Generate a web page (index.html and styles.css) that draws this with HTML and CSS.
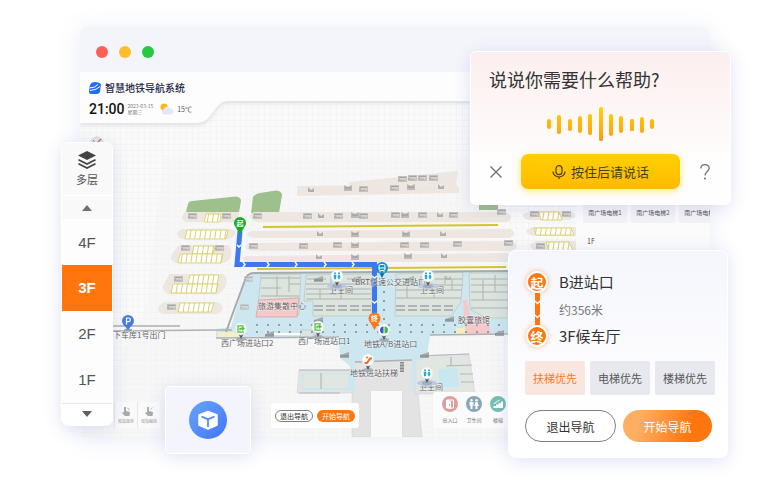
FILE: index.html
```html
<!DOCTYPE html>
<html lang="zh-CN">
<head>
<meta charset="utf-8">
<title>智慧地铁导航系统</title>
<link rel="stylesheet" href="styles.css">
</head>
<body>
<main class="stage">
  <section class="window">
    <div class="titlebar"><i class="dot red"></i><i class="dot yellow"></i><i class="dot green"></i></div>
    <div class="screen">
      <svg class="map" viewBox="80 72 630 365" preserveAspectRatio="xMinYMin slice" role="img" aria-label="车站地图">
        <defs>
          <pattern id="grid" width="6" height="6" patternUnits="userSpaceOnUse"><path d="M0 .5H6M.5 0V6" stroke="#f5f5f6" fill="none"/></pattern>
          <pattern id="bays" width="5" height="40" patternUnits="userSpaceOnUse" patternTransform="skewX(-9)"><rect width="5" height="40" fill="#fff"/><path d="M2.500 0V40" stroke="#d8d16a" stroke-width="1"/></pattern>
          <pattern id="posts" width="11" height="7" patternUnits="userSpaceOnUse"><rect x="3" y="2" width="2" height="2" fill="#929ca4"/></pattern>
          <pattern id="vposts" width="10" height="9" patternUnits="userSpaceOnUse"><rect x="3" y="3" width="2" height="2" fill="#929ca4"/></pattern>
          <g id="kiosk"><rect width="9" height="6" fill="#c4c2bf"/><path d="M1 1.500H8M0 4H6" stroke="#a5a5a8"/><path d="M2 3H8" stroke="#e4e2df"/></g>
          <g id="stair"><path d="M0 0 4 2 8 0V6H0Z" fill="#bcbab8"/><path d="M1 3H7" stroke="#98989b"/></g>
          <g id="step"><path d="M0 5V0L3 3 6 1V5Z" fill="#b0afad"/></g>
          <g id="ramp"><path d="M0 2 9-1V5H0Z" fill="#a6acad"/><path d="M0 3H9" stroke="#7d8587"/></g>
          <g id="pin"><ellipse cy="10" rx="5" ry="2" fill="#a8adb5"/><path d="M-3 4 0 10 3 4Z" fill="#555b63"/><circle r="6" fill="#fff" stroke="#dde3e6" stroke-width=".6"/></g>
          <g id="wc"><ellipse cy="10" rx="10" ry="3" fill="#b7cbe9"/><use href="#pin"/><g fill="#25a8e0"><circle cx="-2" cy="-2.700" r="1"/><path d="M-3.400-1.200h2.800L-1 3.300h-2Z"/><circle cx="2" cy="-2.700" r="1"/><path d="M1.300-1.200h1.400l.9 3H2.700v1.500H1.300V1.800H.4Z"/></g></g>
          <g id="exit"><use href="#pin"/><path d="M3-3.200H-3V3.200H3M-1 1.500V-.5H2.500M1-2 3-.5 1 1.200" fill="none" stroke="#4ec537" stroke-width="1.300"/></g>
          <filter id="soft" x="-5%" y="-20%" width="110%" height="150%"><feDropShadow dx="0" dy="2" stdDeviation="2" flood-color="#8d93a8" flood-opacity=".28"/></filter>
        </defs>
        <rect x="80" y="72" width="630" height="365" fill="#fafafa"/>
        <rect x="80" y="100" width="630" height="337" fill="url(#grid)"/>
        <path d="M164 158H480L508 437H80L145 310Z" fill="#f3f3f4" opacity=".45"/>

        <g fill="#9dc08c">
          <path d="M186 212 188 204Q189 201 192 201L236 196.500Q241 197 241 201L239 212Z"/>
          <path d="M251 213 253 197Q255 194 260 193L276 190.500Q282 191 282 195L279 213Z"/>
          <path d="M479 205H498V210H479Z"/>
        </g>

        <g fill="#eee7e1" stroke="#eee7e1" stroke-width="2" stroke-linejoin="round">
          <path d="M185 213H238V217Q238 221 234 221H188Q183 221 183 217Z"/>
          <path d="M184 230H231Q235 231 234 234T228 238H183Q178 237 178 234T184 230Z"/>
          <path d="M179 246H228Q232 250 230 256T222 262H176Q171 260 172 256Z"/>
          <path d="M170 275H223Q227 279 225 285T217 293H169Q163 291 164 286Z"/>
          <path d="M165 303H217Q222 305 221 309T215 313H164Q159 312 159 309T165 303Z"/>
          <path d="M350 183 457 172 455 183 350 185Z"/>
          <path d="M298 187 455 185Q459 188 458 192L298 195Z"/>
          <path d="M254 213H505Q511 215 510 219L507 221H257Q251 219 251 216Z"/>
          <path d="M251 232 510 230Q514 232 513 235L509 237H253Q248 235 248 234Z"/>
          <path d="M249 244 513 242Q517 245 515 248L511 250H252Q246 248 246 247Z"/>
          <path d="M247 257 507 254Q512 257 510 260L505 261H247Q243 259 244 258Z"/>
          <path d="M530 212H570Q575 214 574 217L567 219H529Q524 218 524 215Z"/>
          <path d="M533 228H575V235H533Q527 233 527 231Z"/>
          <path d="M537 242H575V250H536Q531 248 531 245Z"/>
        </g>
        <g fill="url(#bays)" stroke="#d5ce5c" stroke-width=".8">
          <path d="M206 214H221L220 222H204Z"/><path d="M187 230H228L226 239H185Z"/>
          <path d="M194 246H215L213 254H192Z"/><path d="M180 254H223L221 263H178Z"/>
          <path d="M190 275H219L217 284H188Z"/><path d="M173 284H218L216 293H171Z"/>
          <path d="M180 303H214L211 312H178Z"/>
          <path d="M539 212H559L562 220H541Z"/><path d="M534 228H571L574 235H536Z"/><path d="M546 242H569L573 251H549Z"/>
        </g>
        <use href="#kiosk" x="188" y="213"/><use href="#kiosk" x="222" y="213"/><use href="#kiosk" x="181" y="245"/><use href="#kiosk" x="215" y="245"/><use href="#kiosk" x="174" y="276"/><use href="#kiosk" x="167" y="304"/>
        <use href="#kiosk" x="253" y="213"/><use href="#kiosk" x="303" y="213"/><use href="#step" x="318" y="213"/><use href="#kiosk" x="334" y="213"/><use href="#stair" x="351" y="212"/><use href="#kiosk" x="359" y="213"/><use href="#kiosk" x="391" y="212"/><use href="#stair" x="401" y="212"/><use href="#kiosk" x="418" y="212"/><use href="#step" x="437" y="212"/><use href="#kiosk" x="449" y="212"/><use href="#kiosk" x="497" y="209"/>
        <use href="#step" x="317" y="231"/><use href="#stair" x="351" y="231"/><use href="#stair" x="402" y="231"/><use href="#step" x="440" y="231"/>
        <use href="#kiosk" x="249" y="243"/><use href="#kiosk" x="299" y="243"/><use href="#kiosk" x="333" y="242"/><use href="#stair" x="351" y="242"/><use href="#kiosk" x="400" y="242"/><use href="#kiosk" x="420" y="242"/><use href="#kiosk" x="453" y="241"/><use href="#kiosk" x="504" y="240"/>
        <use href="#step" x="316" y="254"/><use href="#stair" x="351" y="254"/><use href="#stair" x="404" y="253"/><use href="#step" x="441" y="253"/>
        <use href="#step" x="308" y="187"/><use href="#stair" x="344" y="185"/><use href="#kiosk" x="359" y="186"/><use href="#kiosk" x="390" y="185"/><use href="#stair" x="407" y="184"/><use href="#step" x="438" y="184"/>
        <use href="#kiosk" x="398" y="176"/><use href="#kiosk" x="408" y="175"/><use href="#kiosk" x="418" y="175"/><use href="#kiosk" x="429" y="175"/>
        <use href="#kiosk" x="530" y="211"/><use href="#kiosk" x="562" y="211"/><use href="#kiosk" x="536" y="243"/>
        <path d="M263 227 498 225M257 269 506 267" stroke="#d2c62f" stroke-width="2"/>

        <g fill="#e3e3e4" stroke="#d2d3d4" stroke-width=".6">
          <path d="M352 361H415L422 437H402V388H371V437H352Z"/>
          <path d="M299 370H353V393H297Z"/>
          <path d="M415 356 469 354 475 394H415Z"/>
        </g>
        <path d="M371 388H402V437H371Z" fill="#fafafa"/>
        <path d="M302 373H352V390H302Z" fill="#c9e7f0"/>
        <path d="M304 374H348V388H303Z" fill="#dfe7e0"/>
        <path d="M418 358H467L472 390H418Z" fill="#dfe7e0"/>
        <path d="M438 369 457 368 459 387H440Z" fill="#c9e7f0"/>
        <path d="M299 370H350M299 393H340M321 373V389M418 356 469 354M446 366 472 365M460 374H473M461 382H474M420 387H440M451 357V366" stroke="#b2b7b7" stroke-width="1.200" fill="none"/>

        <path d="M231 327 245 280Q247 273 254 273L508 271V333L430 335 427 357 416 361 415 391H350V366L340 358 339 337 216 337V329Z" fill="#cce7f0"/>
        <path d="M355 362 412 360V391H355Z" fill="#e3e3e4"/>
        <path d="M218 332H241V337H218Z" fill="#f4efc8"/>
        <g fill="#dbe4dd" stroke="#bcc4bf" stroke-width=".7">
          <path d="M261 275 301 274 299 315H257Z"/>
          <path d="M306 275 372 274V316H313V301H304Z"/>
          <path d="M396 274 463 272 461 302 451 316H395Z"/>
          <path d="M469 273H508V318H486L470 309Z"/>
          <path d="M301 330H314V337H300Z"/>
        </g>
        <g fill="none" stroke="#aeb4b3">
          <path d="M261 278H300M261 288H281M261 296H299M277 276V296M289 276V292M289 284H300M307 279H326M347 279H371M306 284H371M306 289H371M306 294H371M306 299H371M397 279H415M435 279H462M396 285H463M396 290H462M396 298H461M471 279H508M471 285H508M471 292H508M471 300H508M471 308H508M483 279V300M495 275V292"/>
          <path d="M314 306H371M314 310H371M396 306H455M396 310H455" stroke-width="2" stroke-dasharray="9 3"/>
          <path d="M331 276V283M358 276V283M421 276V284M445 276V284M452 279V290M407 285V298M434 285V298M320 289V299M341 289V299"/>
        </g>
        <path d="M259 300 299 298 297 317H256Z" fill="#f5c8ca" stroke="#d6aeb1"/>
        <path d="M463 300H467L470 316H487L491 334H466L464 316Z" fill="#f5c8ca"/>
        <path d="M456 328H465V335H456Z" fill="#f5edbf"/>
        <path d="M252 322H508V334H252Z" fill="url(#posts)"/>
        <path d="M375 284H393V335H375Z" fill="url(#vposts)"/>
        <path d="M226 332 245 280Q247 273 254 273L508 271" fill="none" stroke="#a5aaac" stroke-width="2"/>
        <path d="M113 326H180M113 331 217 330H232M216 338 339 337M430 335 508 334M355 362 412 360" fill="none" stroke="#aeb0b1" stroke-width="1.500"/>
        <path d="M265 334H300" stroke="#fff" stroke-width="2"/>
        <use href="#ramp" x="314" y="318"/><use href="#ramp" x="265" y="332"/><use href="#ramp" x="340" y="353"/><use href="#ramp" x="420" y="353"/><use href="#ramp" x="445" y="317"/><use href="#ramp" x="495" y="331"/><use href="#ramp" x="314" y="277"/><use href="#ramp" x="352" y="277"/><use href="#ramp" x="405" y="277"/>
        <g opacity=".7"><use href="#kiosk" x="244" y="276"/><use href="#kiosk" x="240" y="304"/><use href="#step" x="354" y="276"/><use href="#step" x="445" y="275"/></g>
        <path d="M400 362H404V372H400Z" fill="#868b8d"/><path d="M400 364H404M400 367H404M400 370H404" stroke="#ced1d1"/>

        <path d="M240 231 237 264.500H374.500V326" fill="none" stroke="#3d79ed" stroke-width="5"/>
        <path d="M237 245 239 247 241 245M243 262 245 264.500 243 267M267 262 269 264.500 267 267M295 262 297 264.500 295 267M324 262 326 264.500 324 267M352 262 354 264.500 352 267M372 276 374.500 278 377 276M372 301 374.500 303 377 301" fill="none" stroke="#fff" stroke-width="1.500"/>

        <g class="label">
          <text x="258" y="309">旅游集散中心</text><text x="355" y="285">BRT快速公交进站口</text>
          <text x="329" y="293">卫生间</text><text x="420" y="293">卫生间</text><text x="419" y="390">卫生间</text>
          <text x="458" y="323">胶囊旅馆</text><text x="221" y="346">西广场进站口2</text><text x="298" y="344">西广场进站口1</text>
          <text x="364" y="347">地铁A/B进站口</text><text x="350" y="376">地铁进站扶梯</text><text x="113" y="338">下车库1号出门</text>
        </g>
        <use href="#wc" x="337" y="276"/><use href="#wc" x="428" y="276"/><use href="#wc" x="427" y="373"/>
        <use href="#exit" x="241" y="329"/><use href="#exit" x="318" y="327"/>
        <use href="#pin" x="384" y="330"/><path d="M383.500 326.500a3.500 3.500 0 0 0 0 7Z" fill="#355cc7"/><path d="M384.500 326.500a3.500 3.500 0 0 1 0 7Z" fill="#44bb45"/>
        <use href="#pin" x="368" y="360"/><path d="M364.500 363H367L370 358.500H372" stroke="#f2672d" stroke-width="2" fill="none"/><circle cx="367" cy="357.500" r="1" fill="#f2672d"/>
        <ellipse cx="128" cy="330" rx="4" ry="1.500" fill="#9fa3aa"/><path d="M124 325 128 330 132 325Z" fill="#477be4"/><circle cx="128" cy="321" r="6" fill="#477be4"/>
        <path d="M126.500 324.500V318H128.500a1.700 1.700 0 0 1 0 3.700H126.500" fill="none" stroke="#fff" stroke-width="1.200"/>
        <path d="M379 272 382 278 385 272Z" fill="#17698c"/><circle cx="382" cy="268" r="6" fill="#168fc4"/><rect x="379" y="264.500" width="6" height="6" rx="1.500" fill="none" stroke="#fff"/><path d="M379 268H385M380 271V272.500M384 271V272.500" stroke="#fff"/>
        <path d="M236 228 240 234 244 228Z" fill="#12ae25"/><circle cx="240" cy="223" r="6" fill="#12ae25"/><text class="pin-text" x="240" y="226">起</text>
        <path d="M370 322 374.500 330 379 322Z" fill="#ff760f"/><circle cx="374.500" cy="318.500" r="6" fill="#ff760f"/><text class="pin-text" x="374.500" y="321">终</text>
        <circle cx="97" cy="143" r="6" fill="#e7e8ee" stroke="#cfd1db"/><path d="M96 144 101 139" stroke="#cf7a3a" stroke-width="1.500"/><path d="M96 144 93 140" stroke="#7180a5"/>
        <path d="M80 72H710V101H228C213 101 214 123 196 123H80Z" fill="#fdfdfe" filter="url(#soft)"/>
      </svg>

      <header class="app-header">
        <div class="brand">
          <svg viewBox="0 0 12 12" width="12" height="12" aria-hidden="true"><path d="M3 .5Q8-1 12 2L11 10Q10 12 8 12H2Q0 12 0 10L.5 5Q1 1.500 3 .5Z" fill="#226ef2"/><path d="M.5 6Q6 6 9 2.500M1 8.500Q8 8 11 4.500" stroke="#fff" fill="none"/></svg>
          <h1>智慧地铁导航系统</h1>
        </div>
        <div class="status">
          <time class="clock">21:00</time>
          <div class="date"><span>2023-03-15</span><span>星期三</span></div>
          <svg class="weather" viewBox="0 0 14 12" width="14" height="12" aria-hidden="true"><circle cx="4" cy="4" r="3.500" fill="#fdb614"/><path d="M4 11.500a3 3 0 0 1-.5-5.500 4 4 0 0 1 6.500-.8 3.300 3.300 0 0 1 1.500 6.300Z" fill="#e5e8f4"/></svg>
          <span class="temp">15℃</span>
        </div>
      </header>

      <aside class="facilities">
        <div class="lift-row"><button>南广场电梯1</button><button>南广场电梯2</button><button>南广场电梯3</button></div>
        <p>1F</p>
      </aside>

      <footer class="map-tools">
        <div class="gestures">
          <button><svg viewBox="0 0 10 10" width="10" height="10" aria-hidden="true"><path d="M3 0h2v4l4 1-.5 4H4L1 6l1-1 1 .5Z" fill="#a9abad"/><path d="M6 1q3 0 2 2.500" fill="none" stroke="#c4c6c8"/></svg><span>双指旋转</span></button>
          <button><svg viewBox="0 0 10 10" width="10" height="10" aria-hidden="true"><path d="M3 0h2v4l4 1-.5 4H4L1 6l1-1 1 .5Z" fill="#a9abad"/><path d="M6 3 8.500.500" fill="none" stroke="#c4c6c8"/></svg><span>双指缩放</span></button>
        </div>
        <div class="mini-actions"><button class="mini ghost">退出导航</button><button class="mini solid">开始导航</button></div>
        <div class="poi">
          <button><svg viewBox="0 0 16 16" width="16" height="16" aria-hidden="true"><circle cx="8" cy="8" r="8" fill="#dd9f9d"/><path d="M4.500 4h7v8h-7Z" fill="none" stroke="#fff"/><path d="M5 4 9 5v8L5 12Z" fill="#fff"/><path d="M7.500 8v2" stroke="#dd9f9d"/></svg><span>出入口</span></button>
          <button><svg viewBox="0 0 16 16" width="16" height="16" aria-hidden="true"><circle cx="8" cy="8" r="8" fill="#87a8b9"/><g fill="#fff"><circle cx="5.500" cy="4.300" r="1.200"/><path d="M3.500 6h4v3.500h-1V13h-2V9.500h-1Z"/><circle cx="10.500" cy="4.300" r="1.200"/><path d="M9.500 6h2l1.300 4h-1.300v3h-2v-3H8.200Z"/></g></svg><span>卫生间</span></button>
          <button><svg viewBox="0 0 16 16" width="16" height="16" aria-hidden="true"><circle cx="8" cy="8" r="8" fill="#75bfb5"/><path d="M3.500 12V10h2.500V8.500h2.500V7H11V5.500h2V12Z" fill="#fff"/><path d="M3.500 8 9.500 4" stroke="#fff"/></svg><span>楼梯</span></button>
        </div>
      </footer>
    </div>
  </section>

  <nav class="floors" aria-label="楼层">
    <button class="layers"><svg viewBox="0 0 18 18" width="18" height="18" aria-hidden="true"><path d="M9 0 18 4.500 9 9 0 4.500Z" fill="#444"/><path d="M.5 8.700 9 13 17.500 8.700M.5 12.700 9 17 17.500 12.700" fill="none" stroke="#444" stroke-width="1.700"/></svg><span>多层</span></button>
    <button class="arrow" aria-label="上一层"><svg viewBox="0 0 10 6" width="10" height="6"><path d="M5 0 10 6H0Z" fill="#707070"/></svg></button>
    <button class="floor first">4F</button><button class="floor active">3F</button><button class="floor">2F</button><button class="floor">1F</button>
    <button class="arrow down" aria-label="下一层"><svg viewBox="0 0 10 6" width="10" height="6"><path d="M0 0H10L5 6Z" fill="#606060"/></svg></button>
  </nav>

  <button class="cube" aria-label="三维视图"><svg viewBox="0 0 38 38" width="38" height="38"><defs><linearGradient id="blue" x1="0" y1="0" x2="1" y2="1"><stop stop-color="#67a5fc"/><stop offset="1" stop-color="#4275f9"/></linearGradient></defs><circle cx="19" cy="19" r="19" fill="url(#blue)"/><path d="M19 10.500 28 14V24L19 28 10 24V14Z" fill="#fff" stroke="#fff" stroke-width="1.500" stroke-linejoin="round"/><path d="M12.500 15.500 19 18.300 25.500 15.500M19 18V26" fill="none" stroke="#4b82fb" stroke-width="1.700"/></svg></button>

  <section class="card voice">
    <h2>说说你需要什么帮助?</h2>
    <svg class="wave" viewBox="0 0 108 34" width="108" height="34" aria-hidden="true"><defs><linearGradient id="gold" x1="0" y1="0" x2="0" y2="34" gradientUnits="userSpaceOnUse"><stop stop-color="#ffd500"/><stop offset="1" stop-color="#fa9b14"/></linearGradient></defs><g fill="url(#gold)"><rect x="0" y="12" width="4" height="10" rx="2"/><rect x="10" y="8" width="4" height="19" rx="2"/><rect x="21" y="12" width="4" height="12" rx="2"/><rect x="31" y="9" width="4" height="17" rx="2"/><rect x="41" y="7" width="4" height="21" rx="2"/><rect x="52" y="0" width="4" height="34" rx="1.500"/><rect x="62" y="7" width="4" height="22" rx="2"/><rect x="72" y="9" width="4" height="17" rx="2"/><rect x="83" y="12" width="4" height="12" rx="1.500"/><rect x="93" y="10" width="4" height="16" rx="2"/><rect x="103" y="12" width="4" height="10" rx="2"/></g></svg>
    <div class="voice-row">
      <button class="plain" aria-label="关闭"><svg viewBox="0 0 14 14" width="14" height="14"><path d="M1.500 1.500 12.500 12.500M12.500 1.500 1.500 12.500" stroke="#707070" stroke-width="1.300"/></svg></button>
      <button class="talk"><svg viewBox="0 0 14 14" width="14" height="14" aria-hidden="true"><rect x="4" y=".7" width="6" height="9" rx="3" fill="none" stroke="#48400f" stroke-width="1.200"/><path d="M1 6.500a6 5.500 0 0 0 12 0M7 12V14" fill="none" stroke="#48400f" stroke-width="1.200"/></svg>按住后请说话</button>
      <button class="plain" aria-label="帮助"><svg viewBox="0 0 10 16" width="10" height="16"><path d="M.8 4.500C.8-.5 9.200-.5 9.200 4.300 9.200 7.500 5 7.500 5 11.500" fill="none" stroke="#707070" stroke-width="1.300"/><circle cx="5" cy="14.500" r="1" fill="#707070"/></svg></button>
    </div>
  </section>

  <section class="card route">
    <ol class="stops">
      <li><b class="badge">起</b><strong>B进站口</strong></li>
      <li class="leg"><span class="track"><svg viewBox="0 0 5 32" width="5" height="32" aria-hidden="true"><path d="M0 0H5V32H0Z" fill="#ff760f"/><path d="M0 8 2.500 10.500 5 8M0 22 2.500 24.500 5 22" fill="none" stroke="#fff" stroke-width="1.300"/></svg></span><span>约356米</span></li>
      <li><b class="badge">终</b><strong>3F候车厅</strong></li>
    </ol>
    <div class="options"><button class="selected">扶梯优先</button><button>电梯优先</button><button>楼梯优先</button></div>
    <div class="actions"><button class="ghost">退出导航</button><button class="solid">开始导航</button></div>
  </section>
</main>
</body>
</html>
```
FILE: styles.css
```css
* { box-sizing: border-box; }

body {
  margin: 0;
  background: #fff;
  color: #333;
  font-family: "Noto Sans CJK SC", sans-serif;
}

h1, h2, p, ol { margin: 0; padding: 0; font-weight: 400; }
button {
  margin: 0;
  padding: 0;
  border: 0;
  background: none;
  color: inherit;
  font: inherit;
  white-space: nowrap;
}
svg { display: block; flex: none; }

.stage {
  position: relative;
  display: flex;
  min-height: 100vh;
  padding: 27px 70px 43px 80px;
  overflow: hidden;
}

/* Main window */
.window {
  flex: 1;
  min-width: 0;
  display: flex;
  flex-direction: column;
  border-radius: 8px 8px 0 0;
  background: #f4f5fb;
  box-shadow: 0 2px 24px rgba(92, 106, 196, 0.13);
}
.titlebar {
  display: flex;
  align-items: center;
  gap: 11px;
  height: 45px;
  padding: 4px 16px 0;
}
.dot { width: 12px; height: 12px; border-radius: 50%; }
.red { background: #fe5f57; }
.yellow { background: #febc2e; }
.green { background: #28c840; }

.screen {
  position: relative;
  flex: 1;
  display: grid;
  grid-template: auto 1fr auto / 1fr 134px;
  overflow: hidden;
}
.map { position: absolute; inset: 0; width: 100%; height: 100%; }
.label { font-size: 8px; fill: #5d6165; stroke: #fff; stroke-width: 1px; stroke-opacity: 0.6; paint-order: stroke; }
.pin-text { font-size: 7px; font-weight: 700; fill: #fff; text-anchor: middle; }

.app-header, .facilities, .map-tools { position: relative; }
.app-header { grid-column: 1 / 3; padding: 7px 9px 0; }
.brand { display: flex; align-items: center; gap: 4px; height: 17px; }
.brand h1 { font-size: 10px; line-height: 14px; font-weight: 500; color: #222744; }
.status { display: flex; align-items: center; height: 26px; }
.clock { font: 500 14px/16px Roboto, sans-serif; color: #111; }
.date { display: flex; flex-direction: column; margin-left: 3px; font-size: 5px; line-height: 6px; color: #777; }
.weather { margin-left: 7px; }
.temp { margin-left: 3px; font-size: 7px; color: #555; }

.facilities {
  grid-column: 2;
  grid-row: 2 / 4;
  padding: 79px 0 0 7px;
  background: #fbfbfc;
  overflow: hidden;
}
.lift-row { display: flex; gap: 4px; }
.lift-row button {
  flex: none;
  width: 44px;
  height: 22px;
  border-radius: 2px;
  background: #f3f3f6;
  color: #555;
  font-size: 6px;
}
.facilities p { padding: 13px 4px; font-size: 7px; line-height: 10px; color: #555; }

.map-tools {
  grid-column: 1 / 3;
  grid-row: 3;
  display: flex;
  align-items: flex-end;
  padding: 0 0 9px 34px;
}
.map-tools button { display: flex; flex-direction: column; align-items: center; justify-content: center; }
.gestures { display: flex; }
.gestures button {
  width: 23px;
  height: 26px;
  gap: 1px;
  border-left: 1px solid #e8e8ea;
  background: #fafafb;
  color: #999;
  font-size: 4px;
  line-height: 6px;
}
.mini-actions {
  display: flex;
  align-items: center;
  justify-content: center;
  gap: 4px;
  height: 25px;
  margin-left: 111px;
  padding: 0 4px;
  border-radius: 3px;
  background: #fff;
}
.map-tools .mini { width: 38px; height: 12px; border-radius: 6px; font-size: 7px; line-height: 10px; }
.ghost { border: 1px solid #808080; background: #fff; }
.solid { background: linear-gradient(105deg, #ffae62 20%, #ff760f 75%); color: #fff; }
.mini.solid { background: #ff760f; }
.poi {
  display: flex;
  gap: 8px;
  margin-left: 74px;
  padding: 4px 9px 3px;
  border-radius: 3px;
  background: #fbfbfc;
}
.poi button { width: 16px; gap: 3px; color: #777; font-size: 5px; line-height: 10px; }

/* Floating controls */
.floors, .cube, .card {
  position: absolute;
  box-shadow: 0 3px 18px rgba(68, 78, 180, 0.16);
}
.floors {
  top: 142px;
  left: 61px;
  display: flex;
  flex-direction: column;
  width: 52px;
  border: 1px solid #fff;
  border-radius: 7px;
  background: #fdfdfd;
  color: #555;
}
.floors button { display: flex; align-items: center; justify-content: center; }
.floors .layers { flex-direction: column; gap: 2px; height: 52px; font-size: 11px; line-height: 16px; background: #f9f9f9; border-radius: 6px 6px 0 0; }
.floors .arrow { height: 25px; border-top: 1px solid #fff; border-bottom: 1px solid #fff; background: #f9f9f9; }
.floors .floor { height: 46px; font: 15px/20px "Liberation Sans", sans-serif; }
.floors .floor.first { height: 45px; }
.floors .floor.active { background: #ff760f; color: #fff; font-weight: 700; }
.floors .down { height: 22px; border-top-color: #e9e9e9; background: #fff; border-radius: 0 0 6px 6px; }

.cube {
  top: 386px;
  left: 165px;
  display: flex;
  align-items: center;
  justify-content: center;
  width: 86px;
  height: 68px;
  border: 1px solid #fff;
  border-radius: 5px;
  background: #f4f5fc;
}

.card { border: 1px solid #fff; }
.voice {
  top: 51px;
  right: 49px;
  width: 261px;
  padding: 14px 18px 15px;
  border-radius: 6px;
  background: linear-gradient(#fceeee, #fffefe 75%);
}
.voice h2 { font-size: 18px; line-height: 27px; }
.wave { margin: 14px auto 13px; }
.voice-row { display: flex; align-items: center; gap: 18px; }
.plain { display: flex; align-items: center; justify-content: center; width: 14px; height: 20px; }
.talk {
  flex: 1;
  display: flex;
  align-items: center;
  justify-content: center;
  gap: 5px;
  height: 35px;
  border-radius: 7px;
  background: linear-gradient(#ffd000, #ffba00);
  box-shadow: 0 2px 8px rgba(255, 199, 0, 0.45);
  color: #48400f;
  font-size: 13px;
}

.route {
  top: 250px;
  right: 52px;
  width: 220px;
  padding: 18px 12px 15px 16px;
  border-radius: 8px;
  background: linear-gradient(#f5f6fc, #fff 80%);
}
.stops { list-style: none; }
.stops li { display: flex; align-items: center; gap: 10px; height: 26px; }
.stops strong { font-size: 15px; line-height: 22px; font-weight: 400; }
.stops .leg { height: 28px; color: #777; font-size: 12px; }
.badge {
  position: relative;
  z-index: 1;
  display: flex;
  align-items: center;
  justify-content: center;
  width: 22px;
  height: 22px;
  margin: 0 1px;
  border: 2px solid #fff;
  border-radius: 50%;
  background: #ff760f;
  box-shadow: 0 0 5px rgba(255, 118, 15, 0.5);
  color: #fff;
  font-size: 13px;
  font-weight: 700;
}
.track { display: flex; justify-content: center; width: 24px; }
.options { display: flex; gap: 5px; margin-top: 12px; }
.options button { flex: 1; height: 34px; border-radius: 2px; background: #e8e9ef; color: #555; font-size: 11px; }
.options .selected { background: #f9e6df; color: #ff7621; }
.actions { display: flex; gap: 7px; margin: 15px 3px 0 0; }
.actions button { flex: 1; height: 32px; border-radius: 16px; font-size: 12px; }
```
